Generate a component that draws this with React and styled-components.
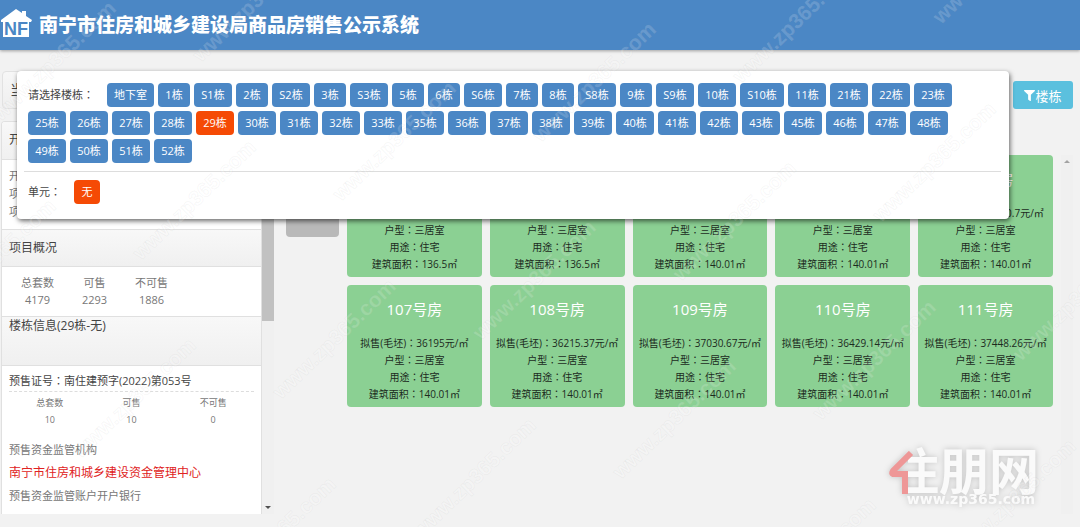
import { useState } from 'react';
import styled, { createGlobalStyle } from 'styled-components';
import { FaFilter } from 'react-icons/fa';

const GlobalStyle = createGlobalStyle`
    * {
        box-sizing: border-box;
    }
    body {
        margin: 0;
        background-color: #f2f2f2;
        color: #444;
        font-family: 'Open Sans', 'Noto Sans CJK SC', sans-serif;
        font-size: 11px;
    }
    button {
        font-family: inherit;
        cursor: pointer;
    }
    h1, h2, h3, p, dl, dd {
        margin: 0;
        font-weight: normal;
    }
`;

const Page = styled.div`
    position: relative;
    display: flex;
    flex-direction: column;
    height: 100vh;
    padding-bottom: 13px;
    overflow: hidden;
`;

const Header = styled.header`
    display: flex;
    align-items: center;
    flex: none;
    gap: 6px;
    height: 50px;
    background-color: #4b87c5;
    box-shadow: 0 1px 3px rgba(0, 0, 0, 0.35);
    > h1 {
        color: white;
        font-size: 19px;
        font-weight: 900;
        line-height: 28px;
    }
`;

const Toolbar = styled.div`
    display: flex;
    align-items: flex-end;
    flex: none;
    gap: 12px;
    padding: 21px 7px 0 2px;
`;

const Location = styled.div`
    flex: 1;
    height: 38px;
    padding: 0 7px;
    border: 1px solid #e2e2e2;
    border-radius: 4px;
    background: linear-gradient(#f7f7f7, #efefef);
    font-size: 14px;
    line-height: 36px;
`;

const FilterBtn = styled.button`
    display: flex;
    align-items: center;
    justify-content: center;
    width: 60px;
    height: 28px;
    padding: 0;
    border: none;
    border-radius: 3px;
    background-color: #5bc0de;
    color: white;
    font-size: 13px;
`;

const Main = styled.main`
    display: flex;
    flex: 1;
    min-height: 0;
`;

const Sidebar = styled.aside`
    display: flex;
    flex: none;
    width: 274px;
    padding: 12px 0 0 1px;
`;

const Panels = styled.div`
    flex: 1;
    overflow: hidden;
    border: 1px solid #e0e0e0;
    border-bottom: none;
    border-radius: 4px 4px 0 0;
    background-color: white;
`;

const PanelHead = styled.h2`
    height: ${(props) => (props.$tall ? '50px' : '38px')};
    padding: 0 7px;
    border-top: ${(props) => (props.$first ? 'none' : '1px solid #e0e0e0')};
    border-bottom: 1px solid #e0e0e0;
    background: linear-gradient(#f8f8f8, #f0f0f0);
    font-size: 12px;
    line-height: ${(props) => (props.$tall ? '18px' : '36px')};
`;

const PanelBody = styled.div`
    padding: 7px 7px 8px;
    color: #777;
    line-height: 18px;
`;

const Counts = styled.dl`
    display: grid;
    grid-template-columns: ${(props) => (props.$wide ? 'repeat(3, 1fr)' : 'repeat(3, 57px)')};
    font-size: ${(props) => (props.$wide ? '9px' : '11px')};
    line-height: 17px;
    text-align: center;
`;

const Licence = styled.div`
    padding: 5px 7px 0;
    color: #777;
    > h3 {
        margin-bottom: 2px;
        border-bottom: 1px dashed #ddd;
        color: #444;
        font-size: 11px;
        line-height: 20px;
    }
`;

const Bank = styled.div`
    padding-top: 10px;
    line-height: 23px;
    > strong {
        display: block;
        color: #e02222;
        font-size: 12px;
        font-weight: normal;
    }
`;

const Track = styled.div`
    display: flex;
    flex-direction: column;
    align-items: center;
    justify-content: space-between;
    width: 12px;
    padding: 5px 0;
    background-color: #f0f0f0;
`;

const Thumb = styled.div`
    align-self: stretch;
    height: 50%;
    margin-bottom: auto;
    background-color: #c1c1c1;
`;

const Arrow = styled.span`
    border: 3px solid transparent;
    ${(props) => (props.$up ? 'border-bottom-color: #a3a3a3; border-top: none;' : 'border-top-color: #505050; border-bottom: none;')}
`;

const Rooms = styled.section`
    display: flex;
    flex: 1;
    gap: 8px;
    padding: 46px 7px 0 12px;
`;

const Floor = styled.div`
    flex: none;
    width: 53px;
    height: 82px;
    border-radius: 4px;
    background-color: #b9b9b9;
`;

const Grid = styled.div`
    display: grid;
    grid-template-columns: repeat(5, 1fr);
    align-content: start;
    flex: 1;
    gap: 8px;
`;

const Card = styled.article`
    height: 122px;
    padding-top: 9px;
    border-radius: 4px;
    background-color: #8bd093;
    color: #1c2b1e;
    font-size: 10px;
    line-height: 17px;
    text-align: center;
    white-space: nowrap;
    > h3 {
        margin-bottom: 11px;
        color: white;
        font-size: 15px;
        line-height: 30px;
    }
`;

// 冒号居中显示
const Colon = styled.span.attrs({ children: '：' })`
    font-family: 'Noto Sans CJK TC', sans-serif;
    line-height: 1;
`;

const Popup = styled.div`
    position: absolute;
    top: 71px;
    left: 17px;
    right: 71px;
    padding: 12px 8px 15px 7px;
    border-radius: 4px;
    background-color: white;
    box-shadow: 1px 2px 5px rgba(0, 0, 0, 0.6);
`;

const Options = styled.div`
    display: flex;
    flex-wrap: wrap;
    gap: 4px;
    padding: 0 24px 0 4px;
`;

const Divider = styled.hr`
    margin: 8px 0;
    border: none;
    border-top: 1px solid #ddd;
`;

const OptionLabel = styled.span`
    margin-right: 9px;
    line-height: 24px;
`;

const OptionBtn = styled.button`
    min-width: ${(props) => 20 + props.$chars * 6}px;
    height: 24px;
    padding: 0 7px;
    border: none;
    border-radius: 4px;
    background-color: ${(props) => (props.$on ? '#f54a05' : '#4b87c5')};
    color: white;
    font-size: 11px;
    line-height: 24px;
`;

const Brand = styled.div`
    position: absolute;
    right: 41px;
    bottom: 22px;
    width: 150px;
    color: #fafafa;
    text-align: center;
    filter: drop-shadow(0 0 3px rgba(0, 0, 0, 0.2));
    > svg {
        position: absolute;
        top: 3px;
        left: 0;
    }
    > p {
        font-size: 50px;
        font-weight: 700;
        line-height: 46px;
        white-space: nowrap;
    }
    > p span {
        background: linear-gradient(to right, transparent 38%, #fafafa 38%);
        background-clip: text;
        color: transparent;
    }
    > small {
        display: block;
        padding-left: 14px;
        font-family: 'DejaVu Sans', sans-serif;
        font-size: 14px;
        font-weight: bold;
        line-height: 11px;
    }
`;

const Marks = styled.svg`
    position: absolute;
    inset: 0;
    width: 100%;
    height: 100%;
    pointer-events: none;
    text {
        fill: rgba(255, 255, 255, 0.17);
        stroke: rgba(150, 150, 150, 0.07);
        font: bold 21px 'Liberation Sans', sans-serif;
    }
`;

const BUILDINGS = [
    '地下室', '1栋', 'S1栋', '2栋', 'S2栋', '3栋', 'S3栋', '5栋', '6栋', 'S6栋', '7栋', '8栋', 'S8栋',
    '9栋', 'S9栋', '10栋', 'S10栋', '11栋', '21栋', '22栋', '23栋', '25栋', '26栋', '27栋', '28栋', '29栋',
    '30栋', '31栋', '32栋', '33栋', '35栋', '36栋', '37栋', '38栋', '39栋', '40栋', '41栋', '42栋', '43栋',
    '45栋', '46栋', '47栋', '48栋', '49栋', '50栋', '51栋', '52栋'
];

const ROOMS = [
    { no: '102', price: '36195', area: '136.5' },
    { no: '103', price: '36215.37', area: '136.5' },
    { no: '104', price: '37030.67', area: '140.01' },
    { no: '105', price: '36429.14', area: '140.01' },
    { no: '106', price: '37480.7', area: '140.01' },
    { no: '107', price: '36195', area: '140.01' },
    { no: '108', price: '36215.37', area: '140.01' },
    { no: '109', price: '37030.67', area: '140.01' },
    { no: '110', price: '36429.14', area: '140.01' },
    { no: '111', price: '37448.26', area: '140.01' }
];

// 斜向水印的起点
const MARKS = [];
for (let row = -1; row < 5; row++) {
    for (let col = -2; col < 8; col++) {
        const x = 201 + col * 200 - row * 60;
        const y = 63 - col * 59 + row * 198;
        if (x > -60 && x < 1060 && y > 20 && y < 620) {
            MARKS.push([x, y]);
        }
    }
}

const Logo = () => (
    <svg width="33" height="50" viewBox="0 0 33 50" aria-hidden="true">
        <path d="M1 20 L16 9 L22 13 V11 H26 V16 L32 20 L31 22 H29 V37 H3 V22 H1 Z" fill="white" />
        <text x="16" y="35" textAnchor="middle" fill="#4b87c5" fontFamily="Liberation Sans, sans-serif" fontWeight="bold" fontSize="18">
            NF
        </text>
    </svg>
);

const CountList = ({ values, wide }) => (
    <Counts $wide={wide}>
        {['总套数', '可售', '不可售'].map((name, i) => (
            <div key={name}>
                <dt>{name}</dt>
                <dd>{values[i]}</dd>
            </div>
        ))}
    </Counts>
);

const App = () => {
    const [isOpen, setIsOpen] = useState(true);
    const [building, setBuilding] = useState('29栋');

    return (
        <Page>
            <GlobalStyle />
            <Header>
                <Logo />
                <h1>南宁市住房和城乡建设局商品房销售公示系统</h1>
            </Header>
            <Toolbar>
                <Location>当前位置</Location>
                <FilterBtn onClick={() => setIsOpen(!isOpen)}>
                    <FaFilter size={11} />
                    楼栋
                </FilterBtn>
            </Toolbar>
            <Main>
                <Sidebar>
                    <Panels>
                        <PanelHead $first>开发信息</PanelHead>
                        <PanelBody>
                            <p>开发企业</p>
                            <p>项目名称</p>
                            <p>项目地址</p>
                        </PanelBody>
                        <PanelHead>项目概况</PanelHead>
                        <PanelBody>
                            <CountList values={['4179', '2293', '1886']} />
                        </PanelBody>
                        <PanelHead $tall>楼栋信息({building}-无)</PanelHead>
                        <Licence>
                            <h3>
                                预售证号
                                <Colon />
                                南住建预字(2022)第053号
                            </h3>
                            <CountList wide values={['10', '10', '0']} />
                            <Bank>
                                <p>预售资金监管机构</p>
                                <strong>南宁市住房和城乡建设资金管理中心</strong>
                                <p>预售资金监管账户开户银行</p>
                            </Bank>
                        </Licence>
                    </Panels>
                    <Track>
                        <Arrow $up />
                        <Thumb />
                        <Arrow />
                    </Track>
                </Sidebar>
                <Rooms>
                    <Floor />
                    <Grid>
                        {ROOMS.map((room) => (
                            <Card key={room.no}>
                                <h3>{room.no}号房</h3>
                                <p>
                                    拟售(毛坯)
                                    <Colon />
                                    {room.price}元/㎡
                                </p>
                                <p>
                                    户型
                                    <Colon />
                                    三居室
                                </p>
                                <p>
                                    用途
                                    <Colon />
                                    住宅
                                </p>
                                <p>
                                    建筑面积
                                    <Colon />
                                    {room.area}㎡
                                </p>
                            </Card>
                        ))}
                    </Grid>
                    <Track>
                        <Arrow $up />
                    </Track>
                </Rooms>
            </Main>
            {isOpen ? (
                <Popup>
                    <Options>
                        <OptionLabel>
                            请选择楼栋
                            <Colon />
                        </OptionLabel>
                        {BUILDINGS.map((name) => (
                            <OptionBtn key={name} $chars={name.length} $on={name === building} onClick={() => setBuilding(name)}>
                                {name}
                            </OptionBtn>
                        ))}
                    </Options>
                    <Divider />
                    <Options>
                        <OptionLabel>
                            单元
                            <Colon />
                        </OptionLabel>
                        <OptionBtn $chars={1} $on>
                            无
                        </OptionBtn>
                    </Options>
                </Popup>
            ) : null}
            <Brand>
                <p>
                    <span>住</span>朋网
                </p>
                <svg width="26" height="46" viewBox="0 0 26 46" aria-hidden="true">
                    <path d="M22 2 L4 20 Q2 23 5 23 H16 V43" fill="none" stroke="#ee9797" strokeWidth="6" />
                </svg>
                <small>www.zp365.com</small>
            </Brand>
            <Marks aria-hidden="true">
                {MARKS.map(([x, y]) => (
                    <text key={`${x},${y}`} transform={`translate(${x} ${y}) rotate(-44)`}>
                        www.zp365.com
                    </text>
                ))}
            </Marks>
        </Page>
    );
};

export default App;
